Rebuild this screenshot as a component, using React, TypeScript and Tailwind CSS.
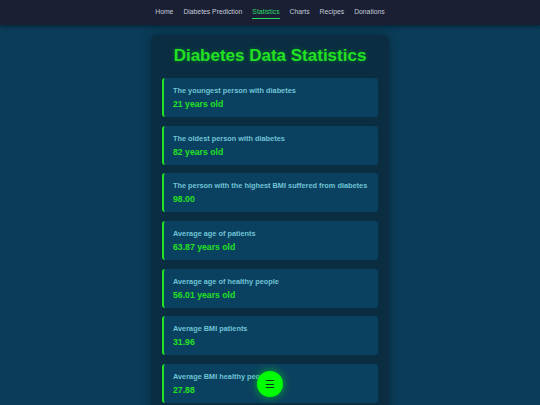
import React from "react";

const items = [
  ["The youngest person with diabetes", "21 years old"],
  ["The oldest person with diabetes", "82 years old"],
  ["The person with the highest BMI suffered from diabetes", "98.00"],
  ["Average age of patients", "63.87 years old"],
  ["Average age of healthy people", "56.01 years old"],
  ["Average BMI patients", "31.96"],
  ["Average BMI healthy people", "27.88"],
  ["Average glucose level patients", "194.90"],
];

export default function App() {
  return (
    <div className="h-[405px] w-[540px] overflow-hidden bg-[#0a3d5a]" style={{ fontFamily: '"Liberation Sans", Arial, sans-serif' }}>
      <nav className="flex h-[25px] items-center justify-center gap-[10px] bg-[#1a1f33] text-[6.8px] text-[#c3cad8] shadow-[0_2px_4px_rgba(0,0,0,0.4)]">
        <span>Home</span>
        <span>Diabetes Prediction</span>
        <span className="relative text-[#2bd96b]">
          Statistics
          <span className="absolute left-0 right-0 top-[11px] h-[1px] bg-[#2bd96b]" />
        </span>
        <span>Charts</span>
        <span>Recipes</span>
        <span>Donations</span>
      </nav>
      <div className="flex justify-center pt-[10px]">
        <div className="w-[238px] rounded-[6px] bg-[#0a2d42] px-[11px] pt-[10px] shadow-[0_0_12px_rgba(0,0,0,0.35)]">
          <h1 className="mb-[12px] text-center text-[17px] font-bold leading-[21px] text-[#22e022] [text-shadow:0_0_4px_rgba(0,255,0,0.35)]">
            Diabetes Data Statistics
          </h1>
          <div className="flex flex-col gap-[8.7px]">
            {items.map(([label, value]) => (
              <div key={label} className="h-[39px] rounded-[3px] border-l-2 border-[#22e022] bg-[#0b4160] pl-[9px] pt-[8px]">
                <div className="text-[7.35px] font-bold leading-[9px] text-[#6fc3d6]">{label}</div>
                <div className="mt-[4px] text-[8.7px] font-bold leading-[11px] text-[#22e022]">{value}</div>
              </div>
            ))}
          </div>
        </div>
      </div>
      <div className="absolute left-[257px] top-[371px] flex h-[26px] w-[26px] items-center justify-center rounded-full bg-[#00ff00] text-[11px] text-[#06301c] shadow-[0_0_8px_rgba(0,255,0,0.6)]">
        ☰
      </div>
    </div>
  );
}
